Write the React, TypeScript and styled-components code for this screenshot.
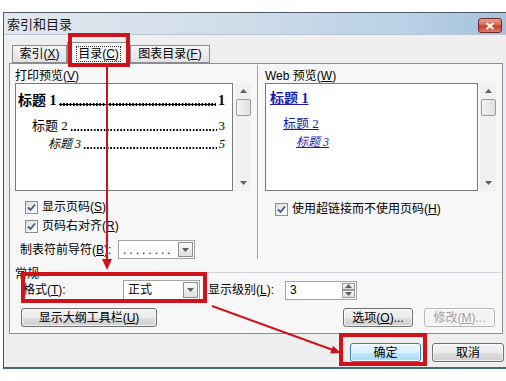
import React from 'react';
import styled, { createGlobalStyle } from 'styled-components';

const Global = createGlobalStyle`
  html, body { margin: 0; padding: 0; background: #ffffff; }
  body {
    font-family: "Liberation Sans", "Noto Sans CJK SC", sans-serif;
    font-size: 12px;
    color: #000;
  }
  * { box-sizing: border-box; }
`;

const Page = styled.div`
  position: relative;
  width: 506px;
  height: 381px;
  overflow: hidden;
`;

const Window = styled.div`
  margin: 12px 0 0 3px;
  width: 503px;
  height: 357px;
  border: 1px solid #4d5a66;
  border-right: none;
  border-bottom: 2px solid #3f6d7d;
  background: #efefef;
  display: flex;
  flex-direction: column;
`;

const TitleBar = styled.div`
  height: 22px;
  display: flex;
  align-items: center;
  justify-content: space-between;
  padding-left: 3px;
  background: linear-gradient(to right, #e1e8ef 0%, #d0dde9 45%, #b9d0e6 80%, #a6c2de 100%);
  border-bottom: 1px solid #b9c6d3;
`;

const Title = styled.span`
  font-size: 13px;
  line-height: 16px;
  margin-top: 2px;
  color: #1a1a1a;
`;

const CloseBtn = styled.div`
  width: 24px;
  height: 15px;
  margin-right: 4px;
  margin-top: 4px;
  border: 1px solid #6d2a24;
  border-radius: 3px;
  background: linear-gradient(#e6a08f 0%, #d46a55 45%, #c2402c 55%, #d9806b 100%);
  display: flex;
  align-items: center;
  justify-content: center;
`;

const Body = styled.div`
  flex: 1;
  padding: 7px 0 0 5px;
  display: flex;
  flex-direction: column;
`;

const TabStrip = styled.div`
  height: 21px;
  display: flex;
  align-items: flex-end;
  padding-left: 3px;
`;

const Tab = styled.div<{ $w: number; $sel?: boolean }>`
  width: ${(p) => p.$w}px;
  height: ${(p) => (p.$sel ? 22 : 18)}px;
  margin-bottom: ${(p) => (p.$sel ? -1 : 0)}px;
  position: relative;
  z-index: ${(p) => (p.$sel ? 2 : 1)};
  border: 1px solid #8a8d93;
  border-bottom: ${(p) => (p.$sel ? 'none' : '1px solid #8a8d93')};
  background: ${(p) => (p.$sel ? '#f7f7f7' : 'linear-gradient(#f3f3f3, #e2e2e2)')};
  display: flex;
  align-items: center;
  justify-content: center;
  font-size: 12px;
  line-height: 14px;
  white-space: nowrap;
`;

const Focus = styled.span`
  border: 1px dotted #333;
  padding: 0 1px;
  line-height: 14px;
`;

const Panel = styled.div`
  width: 494px;
  height: 271px;
  border: 1px solid #8a8d93;
  background: #f7f7f7;
  display: flex;
  flex-direction: column;
`;

const TopSection = styled.div`
  height: 195px;
  display: flex;
`;

const LeftCol = styled.div`
  width: 247px;
  padding: 6px 0 0 5px;
  display: flex;
  flex-direction: column;
`;

const RightCol = styled.div`
  flex: 1;
  margin-top: 1px;
  border-left: 1px solid #a7a7a7;
  padding: 5px 0 0 7px;
  display: flex;
  flex-direction: column;
`;

const Label = styled.div`
  height: 13px;
  line-height: 13px;
  font-size: 12px;
  white-space: nowrap;
`;

const Acc = styled.span`
  text-decoration: underline;
`;

const PreviewRow = styled.div`
  height: 108px;
  display: flex;
`;

const WhiteBox = styled.div<{ $w: number }>`
  width: ${(p) => p.$w}px;
  height: 108px;
  border: 1px solid #7a7a7a;
  background: #ffffff;
  display: flex;
  flex-direction: column;
`;

const ScrollBar = styled.div`
  width: 16px;
  margin-left: 2px;
  height: 108px;
  display: flex;
  flex-direction: column;
  align-items: center;
  background: #f1f1f1;
`;

const ScrollArrow = styled.div`
  width: 16px;
  height: 16px;
  display: flex;
  align-items: center;
  justify-content: center;
`;

const Thumb = styled.div`
  width: 15px;
  height: 17px;
  border: 1px solid #9c9c9c;
  border-radius: 2px;
  background: linear-gradient(to right, #f4f4f4, #e0e0e0);
`;

const Track = styled.div`
  flex: 1;
`;

const TocLine = styled.div<{ $indent: number; $size: number; $bold?: boolean; $italic?: boolean; $mt: number }>`
  display: flex;
  align-items: flex-end;
  padding-left: ${(p) => p.$indent}px;
  padding-right: 7px;
  margin-top: ${(p) => p.$mt}px;
  height: 18px;
  line-height: 18px;
  font-family: "Liberation Serif", "Noto Sans CJK SC", serif;
  font-size: ${(p) => p.$size}px;
  font-weight: ${(p) => (p.$bold ? 700 : 400)};
  font-style: ${(p) => (p.$italic ? 'italic' : 'normal')};
  white-space: nowrap;
`;

const TocText = styled.span`
  line-height: 18px;
`;

const Leader = styled.span<{ $bold?: boolean }>`
  flex: 1;
  height: ${(p) => (p.$bold ? 3 : 2)}px;
  margin: 0 2px 4px 2px;
  background-image: radial-gradient(circle, #000 ${(p) => (p.$bold ? 1.3 : 0.8)}px, transparent ${(p) => (p.$bold ? 1.5 : 1)}px);
  background-size: ${(p) => (p.$bold ? '3.3px 3px' : '3.3px 2px')};
  background-repeat: repeat-x;
`;

const WebLine = styled.div<{ $indent: number; $size: number; $bold?: boolean; $italic?: boolean; $mt: number }>`
  padding-left: ${(p) => p.$indent}px;
  margin-top: ${(p) => p.$mt}px;
  height: 18px;
  line-height: 18px;
  font-family: "Liberation Serif", "Noto Sans CJK SC", serif;
  font-size: ${(p) => p.$size}px;
  font-weight: ${(p) => (p.$bold ? 700 : 400)};
  font-style: ${(p) => (p.$italic ? 'italic' : 'normal')};
  color: #1b1bb4;
  white-space: nowrap;
`;

const WebLink = styled.span`
  text-decoration: underline;
`;

const CheckRow = styled.div<{ $mt: number }>`
  display: flex;
  align-items: center;
  gap: 4px;
  height: 20px;
  margin-top: ${(p) => p.$mt}px;
  padding-left: 10px;
  white-space: nowrap;
`;

const CheckText = styled.span`
  line-height: 14px;
`;

const CheckBox = styled.span`
  width: 13px;
  height: 13px;
  border: 1px solid #8e8f8f;
  background: linear-gradient(135deg, #dcdcdc, #ffffff);
  display: flex;
  align-items: center;
  justify-content: center;
`;

const FieldRow = styled.div<{ $mt: number; $pl: number }>`
  display: flex;
  align-items: center;
  height: 20px;
  margin-top: ${(p) => p.$mt}px;
  padding-left: ${(p) => p.$pl}px;
  white-space: nowrap;
`;

const FieldLabel = styled.span<{ $w: number; $pl?: number }>`
  width: ${(p) => p.$w}px;
  padding-left: ${(p) => p.$pl ?? 0}px;
  line-height: 14px;
`;

const Combo = styled.div<{ $w: number; $h: number }>`
  width: ${(p) => p.$w}px;
  height: ${(p) => p.$h}px;
  border: 1px solid #a3a3a3;
  background: #ffffff;
  display: flex;
  align-items: center;
  padding: 1px;
`;

const ComboText = styled.span<{ $dots?: boolean }>`
  flex: 1;
  padding-left: 3px;
  line-height: 14px;
  letter-spacing: ${(p) => (p.$dots ? '3px' : '0')};
`;

const ComboBtn = styled.span`
  width: 15px;
  height: 100%;
  border: 1px solid #8f8f8f;
  background: linear-gradient(#fbfbfb, #dedede);
  display: flex;
  align-items: center;
  justify-content: center;
`;

const SpinBox = styled.div`
  width: 72px;
  height: 19px;
  border: 1px solid #a3a3a3;
  background: #ffffff;
  display: flex;
  align-items: stretch;
  padding: 1px;
`;

const SpinText = styled.span`
  flex: 1;
  padding-left: 3px;
  line-height: 15px;
`;

const SpinBtns = styled.span`
  width: 13px;
  display: flex;
  flex-direction: column;
`;

const SpinBtn = styled.span`
  flex: 1;
  border: 1px solid #9a9a9a;
  background: linear-gradient(#fafafa, #dcdcdc);
  display: flex;
  align-items: center;
  justify-content: center;
`;

const GroupHeader = styled.div`
  display: flex;
  align-items: center;
  height: 14px;
  margin-top: 6px;
  padding-left: 5px;
`;

const GroupLine = styled.span`
  flex: 1;
  margin: 0 1px 0 4px;
  border-top: 1px solid #cfd5da;
`;

const ButtonRow = styled.div<{ $mt: number; $pl: number; $pr: number }>`
  display: flex;
  align-items: center;
  margin-top: ${(p) => p.$mt}px;
  padding-left: ${(p) => p.$pl}px;
  padding-right: ${(p) => p.$pr}px;
  gap: 11px;
`;

const Spacer = styled.span`
  flex: 1;
`;

const Button = styled.button<{ $w: number; $def?: boolean }>`
  width: ${(p) => p.$w}px;
  height: 19px;
  padding: 0;
  font-family: inherit;
  font-size: 12px;
  line-height: 14px;
  color: ${(p) => (p.disabled ? '#a3a3a3' : '#000')};
  border: 1px solid ${(p) => (p.disabled ? '#b5b5b5' : p.$def ? '#3c7fb1' : '#707070')};
  border-radius: 3px;
  background: ${(p) =>
    p.disabled
      ? '#f4f4f4'
      : p.$def
      ? 'linear-gradient(#eaf6fd 0%, #d9f0fc 50%, #bee6fd 51%, #a7d9f5 100%)'
      : 'linear-gradient(#f2f2f2 0%, #ebebeb 50%, #dddddd 51%, #cfcfcf 100%)'};
  box-shadow: inset 0 0 0 1px rgba(255, 255, 255, 0.7);
  display: flex;
  align-items: center;
  justify-content: center;
  white-space: nowrap;
`;

const Overlay = styled.svg`
  position: absolute;
  left: 0;
  top: 0;
  pointer-events: none;
  z-index: 10;
`;

const Arrow = ({ up }: { up?: boolean }) => (
  <svg width="7" height="4" viewBox="0 0 7 4">
    <path d={up ? 'M0 4 L3.5 0 L7 4 Z' : 'M0 0 L7 0 L3.5 4 Z'} fill="#606060" />
  </svg>
);

const Check = () => (
  <CheckBox>
    <svg width="9" height="9" viewBox="0 0 9 9">
      <path d="M1 4.5 L3.5 7 L8 1.5" fill="none" stroke="#3f5a8c" strokeWidth="1.8" />
    </svg>
  </CheckBox>
);

const Scroll = () => (
  <ScrollBar>
    <ScrollArrow>
      <Arrow up />
    </ScrollArrow>
    <Thumb />
    <Track />
    <ScrollArrow>
      <Arrow />
    </ScrollArrow>
  </ScrollBar>
);

export default function App() {
  return (
    <Page>
      <Global />
      <Window>
        <TitleBar>
          <Title>索引和目录</Title>
          <CloseBtn>
            <svg width="10" height="8" viewBox="0 0 10 8">
              <path d="M1.5 1 L8.5 7 M8.5 1 L1.5 7" stroke="#ffffff" strokeWidth="2" />
            </svg>
          </CloseBtn>
        </TitleBar>
        <Body>
          <TabStrip>
            <Tab $w={55}>
              <span>
                索引(<Acc>X</Acc>)
              </span>
            </Tab>
            <Tab $w={63} $sel>
              <Focus>
                目录(<Acc>C</Acc>)
              </Focus>
            </Tab>
            <Tab $w={80}>
              <span>
                图表目录(<Acc>F</Acc>)
              </span>
            </Tab>
          </TabStrip>
          <Panel>
            <TopSection>
              <LeftCol>
                <Label>
                  打印预览(<Acc>V</Acc>)
                </Label>
                <PreviewRow>
                  <WhiteBox $w={218}>
                    <TocLine $indent={2} $size={14} $bold $mt={8}>
                      <TocText>标题 1</TocText>
                      <Leader $bold />
                      <TocText>1</TocText>
                    </TocLine>
                    <TocLine $indent={16} $size={13} $mt={7}>
                      <TocText>标题 2</TocText>
                      <Leader />
                      <TocText>3</TocText>
                    </TocLine>
                    <TocLine $indent={32} $size={12} $italic $mt={0}>
                      <TocText>标题 3</TocText>
                      <Leader />
                      <TocText>5</TocText>
                    </TocLine>
                  </WhiteBox>
                  <Scroll />
                </PreviewRow>
                <CheckRow $mt={7}>
                  <Check />
                  <CheckText>
                    显示页码(<Acc>S</Acc>)
                  </CheckText>
                </CheckRow>
                <CheckRow $mt={1}>
                  <Check />
                  <CheckText>
                    页码右对齐(<Acc>R</Acc>)
                  </CheckText>
                </CheckRow>
                <FieldRow $mt={5} $pl={5}>
                  <FieldLabel $w={98}>
                    制表符前导符(<Acc>B</Acc>):
                  </FieldLabel>
                  <Combo $w={77} $h={19}>
                    <ComboText $dots>........</ComboText>
                    <ComboBtn>
                      <Arrow />
                    </ComboBtn>
                  </Combo>
                </FieldRow>
              </LeftCol>
              <RightCol>
                <Label>
                  Web 预览(<Acc>W</Acc>)
                </Label>
                <PreviewRow>
                  <WhiteBox $w={213}>
                    <WebLine $indent={4} $size={14} $bold $mt={6}>
                      <WebLink>标题 1</WebLink>
                    </WebLine>
                    <WebLine $indent={17} $size={13} $mt={7}>
                      <WebLink>标题 2</WebLink>
                    </WebLine>
                    <WebLine $indent={30} $size={12} $italic $mt={0}>
                      <WebLink>标题 3</WebLink>
                    </WebLine>
                  </WhiteBox>
                  <Scroll />
                </PreviewRow>
                <CheckRow $mt={8}>
                  <Check />
                  <CheckText>
                    使用超链接而不使用页码(<Acc>H</Acc>)
                  </CheckText>
                </CheckRow>
              </RightCol>
            </TopSection>
            <GroupHeader>
              <span>常规</span>
              <GroupLine />
            </GroupHeader>
            <FieldRow $mt={1} $pl={13}>
              <FieldLabel $w={100}>
                格式(<Acc>T</Acc>):
              </FieldLabel>
              <Combo $w={77} $h={20}>
                <ComboText>正式</ComboText>
                <ComboBtn>
                  <Arrow />
                </ComboBtn>
              </Combo>
              <FieldLabel $w={85} $pl={8}>
                显示级别(<Acc>L</Acc>):
              </FieldLabel>
              <SpinBox>
                <SpinText>3</SpinText>
                <SpinBtns>
                  <SpinBtn>
                    <Arrow up />
                  </SpinBtn>
                  <SpinBtn>
                    <Arrow />
                  </SpinBtn>
                </SpinBtns>
              </SpinBox>
            </FieldRow>
            <ButtonRow $mt={8} $pl={11} $pr={7}>
              <Button $w={136}>
                显示大纲工具栏(<Acc>U</Acc>)
              </Button>
              <Spacer />
              <Button $w={70}>
                选项(<Acc>O</Acc>)...
              </Button>
              <Button $w={71} disabled>
                修改(<Acc>M</Acc>)...
              </Button>
            </ButtonRow>
          </Panel>
          <ButtonRow $mt={9} $pl={0} $pr={2}>
            <Spacer />
            <Button $w={71} $def>
              确定
            </Button>
            <Button $w={72}>取消</Button>
          </ButtonRow>
        </Body>
      </Window>
      <Overlay width="506" height="381" viewBox="0 0 506 381">
        <g fill="none" stroke="#d0121b" strokeWidth="4">
          <rect x="70" y="35" width="58" height="30" />
          <rect x="23" y="274" width="182" height="27" />
          <rect x="341" y="335" width="84" height="29" />
        </g>
        <line x1="107" y1="67" x2="107" y2="262" stroke="#d0121b" strokeWidth="2" />
        <polygon points="102,259 112,259 107,270" fill="#d0121b" />
        <line x1="212" y1="306" x2="333" y2="350" stroke="#d0121b" strokeWidth="2" />
        <polygon points="341,353 330.2,353.4 333,345.8" fill="#d0121b" />
      </Overlay>
    </Page>
  );
}
